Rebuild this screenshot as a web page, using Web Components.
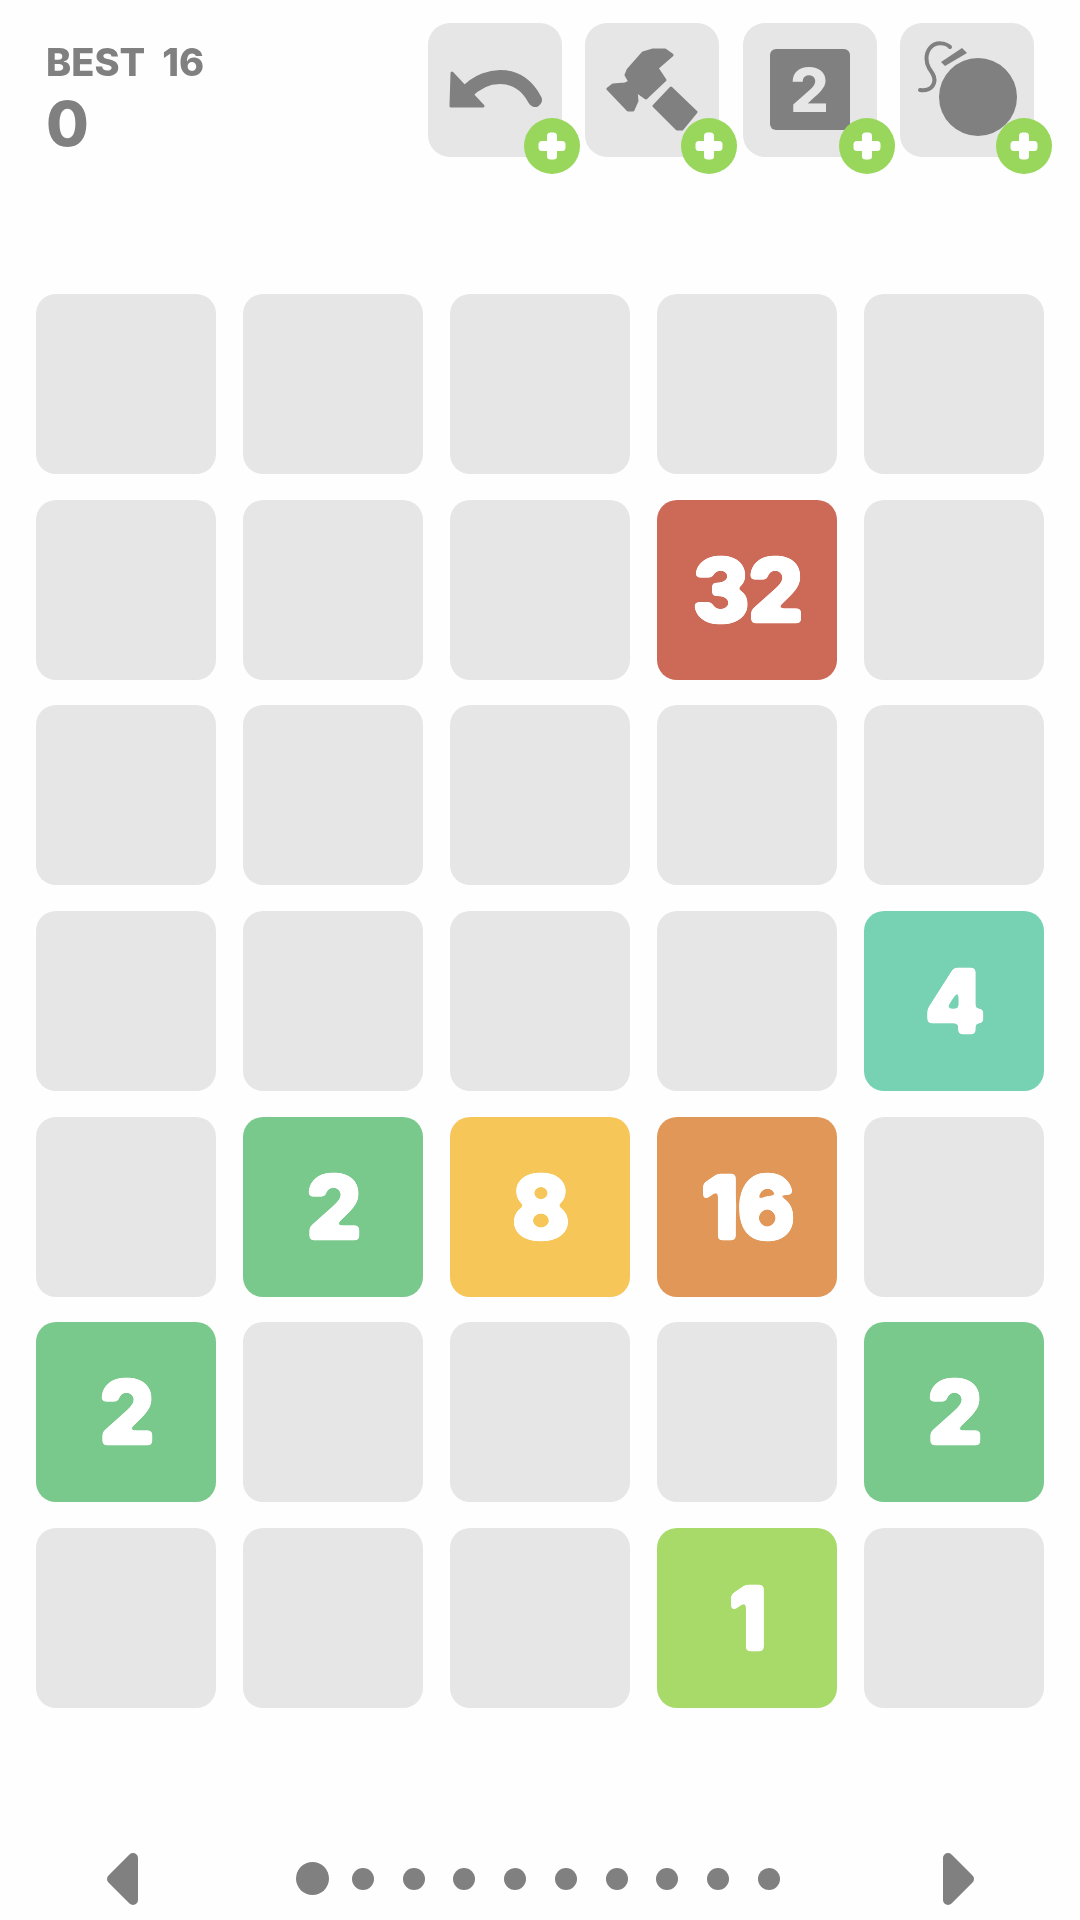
<!DOCTYPE html>
<html>
<head>
<meta charset="utf-8">
<title>Tiles</title>
<style>
  html, body { margin: 0; background: #fefefe; }
</style>
</head>
<body>
<game-screen></game-screen>
<script>
const TILE_COLORS = {
    1: '#a8da6a',
    2: '#79c88c',
    4: '#77d2b4',
    8: '#f6c659',
    16: '#e09757',
    32: '#cd6957',
};

// 7 rows of 5, 0 is an empty cell
const BOARD = [
    0, 0, 0, 0, 0,
    0, 0, 0, 32, 0,
    0, 0, 0, 0, 0,
    0, 0, 0, 0, 4,
    0, 2, 8, 16, 0,
    2, 0, 0, 0, 2,
    0, 0, 0, 1, 0,
];

// thicken, then blur + alpha threshold to round the corners of the digits
const roundFilter = (id, grow, blur) => `
    <svg width="0" height="0" style="position:absolute">
      <filter id="${id}" x="-20%" y="-20%" width="140%" height="140%" color-interpolation-filters="sRGB">
        <feMorphology operator="dilate" radius="${grow}"/>
        <feGaussianBlur stdDeviation="${blur}"/>
        <feComponentTransfer>
          <feFuncA type="linear" slope="8" intercept="-3"/>
        </feComponentTransfer>
        <feGaussianBlur stdDeviation="0.6"/>
      </filter>
    </svg>`;

class ScorePanel extends HTMLElement {
    constructor() {
        super();
        this.attachShadow({ mode: 'open' });
    }

    connectedCallback() {
        this.shadowRoot.innerHTML = `
    <style>
      :host {
        display: flex;
        flex-direction: column;
        color: #808080;
        font-family: Inter, "Noto Sans", sans-serif;
        font-weight: 800;
      }
      .inner {
        filter: blur(0.6px);
      }
      .best {
        display: flex;
        gap: 17px;
        font-size: 38px;
        line-height: 32px;
        margin-top: 23px;
      }
      .score {
        font-size: 62px;
        line-height: 54px;
        margin-top: 19px;
      }
    </style>
    <div class="inner">
      <div class="best"><span>BEST</span><span>${this.getAttribute('best')}</span></div>
      <div class="score">${this.getAttribute('score')}</div>
    </div>
        `;
    }
}

class PowerUp extends HTMLElement {
    constructor() {
        super();
        this.attachShadow({ mode: 'open' });
        this.shadowRoot.innerHTML = `
    <style>
      :host {
        display: block;
        position: relative;
        width: 134px;
        height: 134px;
        border-radius: 22px;
        background: #e6e6e6;
      }
      ::slotted(svg) {
        display: block;
        width: 134px;
        height: 134px;
        filter: blur(0.6px);
      }
      .plus {
        position: absolute;
        right: -18px;
        bottom: -17px;
        width: 56px;
        height: 56px;
      }
    </style>
    <slot></slot>
    <svg class="plus" viewBox="0 0 56 56">
      <circle cx="28" cy="28" r="28" fill="#98d75b"/>
      <rect x="23" y="14.5" width="10" height="27" rx="3.5" fill="#fff"/>
      <rect x="14.5" y="23" width="27" height="10" rx="3.5" fill="#fff"/>
    </svg>
        `;
    }
}

class BoardTile extends HTMLElement {
    constructor() {
        super();
        this.attachShadow({ mode: 'open' });
        this.shadowRoot.innerHTML = `
    <style>
      :host {
        display: flex;
        align-items: center;
        justify-content: center;
        height: 180px;
        border-radius: 20px;
        background: var(--tile-color, #e6e6e6);
        color: #fff;
        font-family: Inter, "Noto Sans", sans-serif;
        font-weight: 800;
        font-size: 88px;
        letter-spacing: -2px;
        line-height: 1;
      }
      .digits {
        filter: url(#round-digits);
      }
    </style>
    ${roundFilter('round-digits', 0.5, 2)}
    <span class="digits"><slot></slot></span>
        `;
    }
}

class BoardGrid extends HTMLElement {
    constructor() {
        super();
        this.attachShadow({ mode: 'open' });
        this.shadowRoot.innerHTML = `
    <style>
      :host {
        display: grid;
        grid-template-columns: repeat(5, 180px);
        column-gap: 27px;
        row-gap: 25.67px;
        margin: 0 36px;
      }
    </style>
    <slot></slot>
        `;
    }

    connectedCallback() {
        BOARD.forEach((value) => {
            const tile = document.createElement('board-tile');
            if (value) {
                tile.textContent = value;
                tile.style.setProperty('--tile-color', TILE_COLORS[value]);
            }
            this.appendChild(tile);
        });
    }
}

class PageNav extends HTMLElement {
    constructor() {
        super();
        this.attachShadow({ mode: 'open' });
        const dots = Array.from({ length: 10 }, (_, i) =>
            `<span class="cell"><span class="dot ${i === 0 ? 'current' : ''}"></span></span>`).join('');
        this.shadowRoot.innerHTML = `
    <style>
      :host {
        display: flex;
        align-items: center;
        justify-content: space-between;
        padding: 0 106px 0 107px;
        height: 52px;
      }
      svg {
        display: block;
        width: 32px;
        height: 52px;
      }
      .dots {
        display: grid;
        grid-template-columns: repeat(10, 50.7px);
        align-items: center;
        justify-items: center;
      }
      .cell {
        display: flex;
      }
      .dot {
        width: 22px;
        height: 22px;
        border-radius: 50%;
        background: #808080;
      }
      .dot.current {
        width: 33px;
        height: 33px;
      }
    </style>
    <svg viewBox="0 0 32 52">
      <path d="M5 26L26 5V47Z" fill="#808080" stroke="#808080" stroke-width="10" stroke-linejoin="round"/>
    </svg>
    <div class="dots">${dots}</div>
    <svg viewBox="0 0 32 52">
      <path d="M27 26L6 5V47Z" fill="#808080" stroke="#808080" stroke-width="10" stroke-linejoin="round"/>
    </svg>
        `;
    }
}

class GameScreen extends HTMLElement {
    constructor() {
        super();
        this.attachShadow({ mode: 'open' });
        this.shadowRoot.innerHTML = `
    <style>
      :host {
        display: flex;
        flex-direction: column;
        width: 1080px;
        height: 1920px;
        overflow: hidden;
      }
      header {
        display: flex;
        justify-content: space-between;
        padding: 23px 46px 0 46px;
        height: 294px;
        box-sizing: border-box;
      }
      .tools {
        display: flex;
        gap: 23.33px;
      }
      page-nav {
        margin-top: 145px;
      }
    </style>
    <header>
      <score-panel best="16" score="0"></score-panel>
      <div class="tools">
        <power-up>
          <svg viewBox="0 0 134 134">
            <path d="M24 50L23 83L55 83Z" fill="#808080" stroke="#808080" stroke-width="3" stroke-linejoin="round"/>
            <path d="M38 70C50 57 64 54 72 54C88 54 99 62 107 77" fill="none" stroke="#808080" stroke-width="14" stroke-linecap="round"/>
          </svg>
        </power-up>
        <power-up>
          <svg viewBox="0 0 134 134">
            <path d="M87 32L80 27L68 27L58 30L43 47L41 52L45 59L40 61L28 62L23 66L43 87L48 87L52 78L51 68L61 75L80 57L72 45Z" fill="#808080" stroke="#808080" stroke-width="3" stroke-linejoin="round"/>
            <path d="M86 65L111 89L97 106H92L69 83Z" fill="#808080" stroke="#808080" stroke-width="3" stroke-linejoin="round"/>
          </svg>
        </power-up>
        <power-up>
          <svg viewBox="0 0 134 134">
            <rect x="27" y="26" width="80" height="81" rx="6" fill="#808080"/>
            <text x="66.5" y="89" text-anchor="middle" font-family="Inter, sans-serif" font-weight="800" font-size="61" fill="#e6e6e6">2</text>
          </svg>
        </power-up>
        <power-up>
          <svg viewBox="0 0 134 134">
            <circle cx="78" cy="74" r="39" fill="#808080"/>
            <path d="M41 39L62 25L67 30L45 43Z" fill="#808080"/>
            <path d="M50 24C46 20 36 18 30 25C25 31 26 40 29 45C32 50 36 54 34 60C32 66 26 68 20 67" fill="none" stroke="#808080" stroke-width="4" stroke-linecap="round"/>
          </svg>
        </power-up>
      </div>
    </header>
    <board-grid></board-grid>
    <page-nav></page-nav>
        `;
    }
}

customElements.define('score-panel', ScorePanel);
customElements.define('power-up', PowerUp);
customElements.define('board-tile', BoardTile);
customElements.define('board-grid', BoardGrid);
customElements.define('page-nav', PageNav);
customElements.define('game-screen', GameScreen);
</script>
</body>
</html>
